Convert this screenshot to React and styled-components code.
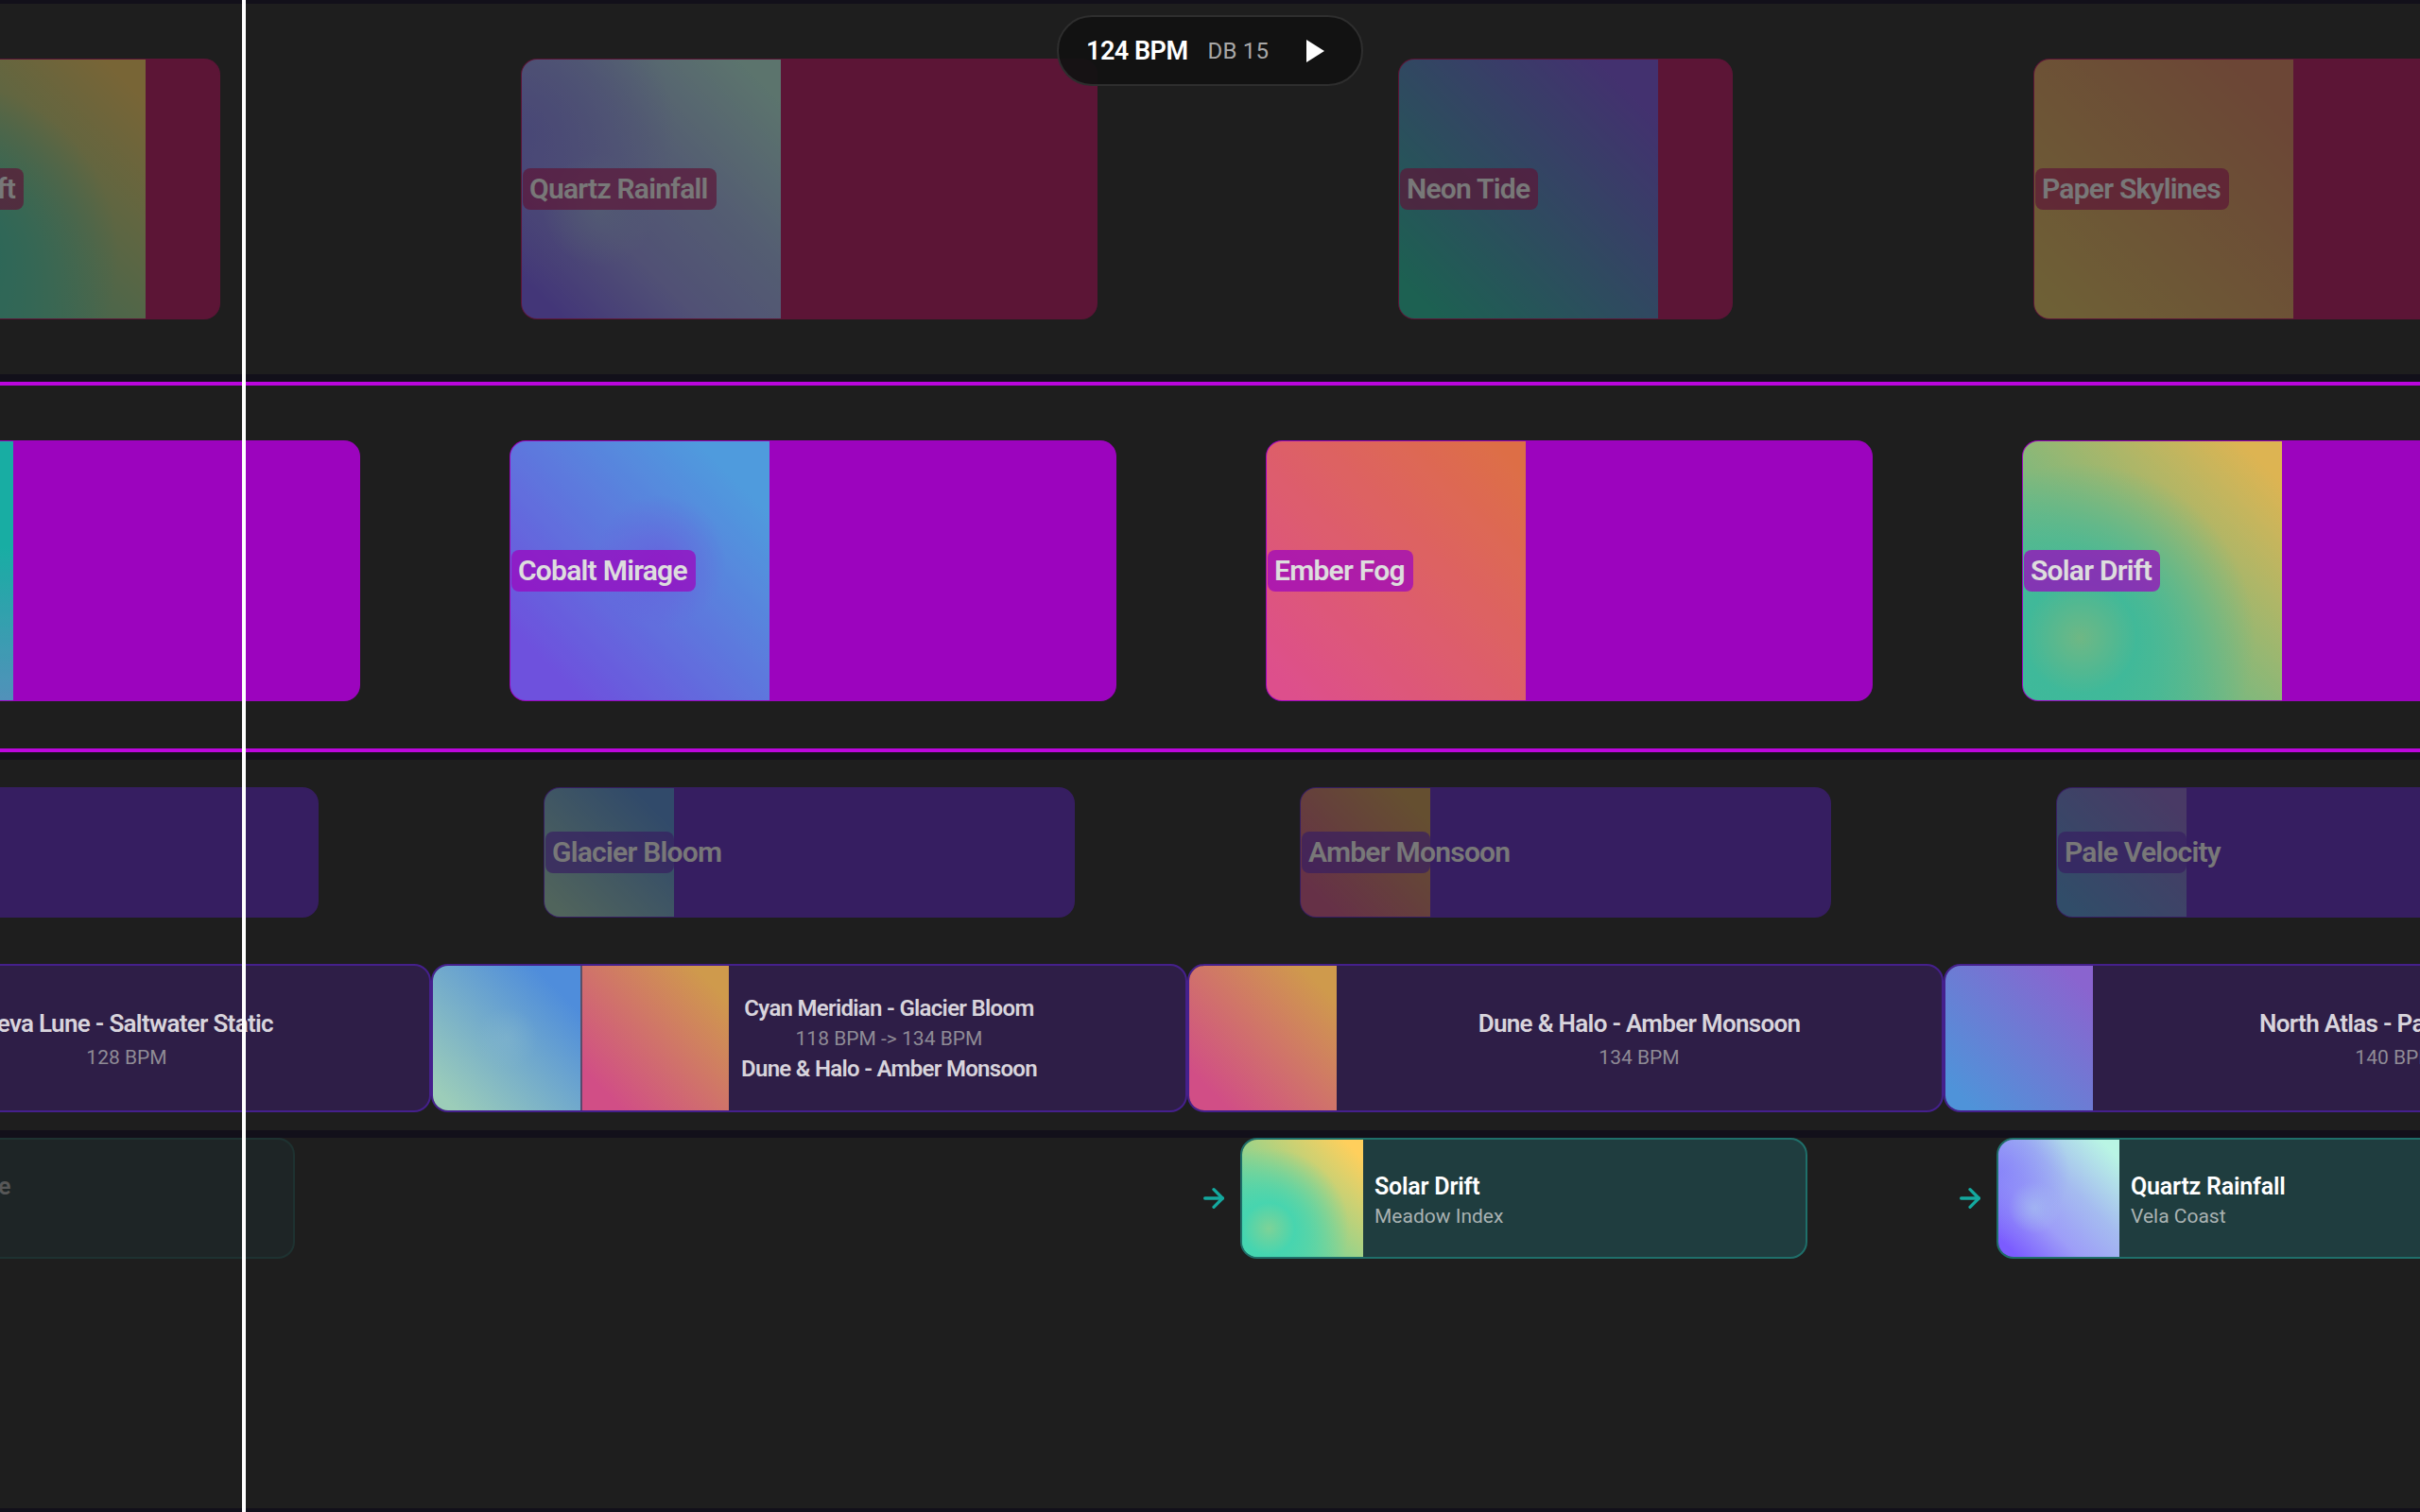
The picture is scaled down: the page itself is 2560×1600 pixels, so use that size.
import React from "react";
import styled, { createGlobalStyle } from "styled-components";
import { ArrowRight } from "lucide-react";

const GlobalStyle = createGlobalStyle`
  html, body {
    margin: 0;
    background: #1e1e1e;
  }
  * {
    box-sizing: border-box;
  }
`;

const gradients = {
  solar: "radial-gradient(circle at 22% 76%, rgba(128,210,150,0.9) 0, rgba(69,213,176,0.95) 20%, rgba(69,213,176,0.7) 32%, rgba(69,213,176,0) 62%), linear-gradient(45deg, #43d6b1 8%, #ffcf5c 92%)",
  quartz: "radial-gradient(circle at 30% 58%, rgba(165,190,240,0.7), rgba(165,190,240,0) 24%), radial-gradient(circle at 0% 28%, rgba(130,125,250,0.75), rgba(130,125,250,0) 48%), linear-gradient(45deg, #7b5cff 8%, #9d9df8 34%, #a5bcf0 60%, #b9f5e4 92%)",
  neon: "linear-gradient(45deg, #1cc5a0 8%, #7a4fe8 88%)",
  paper: "linear-gradient(45deg, #e6c35c 6%, #e0825c 88%)",
  cobalt: "radial-gradient(circle at 58% 46%, rgba(125,91,255,0.55), rgba(125,91,255,0) 32%), linear-gradient(45deg, #7c5bff 14%, #58b1ff 86%)",
  ember: "linear-gradient(45deg, #ff58a0 6%, #ff7d4e 94%)",
  teal: "linear-gradient(0deg, #5ba6d6, #17c7bb 60%)",
  glacier: "radial-gradient(circle at 50% 50%, rgba(135,185,205,0.4), rgba(135,185,205,0) 30%), linear-gradient(45deg, #9ccdb9 8%, #4f8ddb 84%)",
  amber: "linear-gradient(45deg, #d14e86 14%, #cf9a4c 88%)",
  pale: "linear-gradient(45deg, #4f93d9 10%, #8a64cf 90%)",
};

const Stage = styled.div`
  position: relative;
  width: 2560px;
  height: 1600px;
  overflow: hidden;
  background: #1e1e1e;
  font-family: Roboto, sans-serif;
`;

const Strip = styled.div`
  height: ${(p) => p.$h}px;
  background: #12101a;
`;

const Rule = styled.div`
  height: 4px;
  background: #bb06dd;
`;

const Section = styled.section`
  height: ${(p) => p.$h}px;
`;

const Lane = styled.div`
  display: flex;
  gap: ${(p) => p.$gap}px;
  margin-left: ${(p) => p.$offset}px;
  padding-top: ${(p) => p.$top}px;
  width: max-content;
`;

const Clip = styled.div`
  flex: none;
  display: flex;
  width: ${(p) => p.$w}px;
  height: ${(p) => p.$h}px;
  border-radius: 16px;
  background: ${(p) => p.$fill};
  box-shadow: 0 0 0 1px ${(p) => p.$fill};
  opacity: ${(p) => p.$dim};
`;

const ClipArt = styled.div`
  flex: none;
  display: flex;
  align-items: center;
  width: ${(p) => p.$w}px;
  border-radius: 16px 0 0 16px;
`;

const ClipLabel = styled.span`
  min-width: 0;
  max-width: calc(100% - 1px);
  height: 44px;
  margin-left: 1px;
  padding: 0 9px 0 7px;
  border-radius: 8px;
  background: ${(p) => p.$tint};
  color: #fff;
  font-size: 30px;
  font-weight: 600;
  letter-spacing: -0.75px;
  line-height: 44px;
  white-space: nowrap;
`;

const Mix = styled.div`
  flex: none;
  display: flex;
  width: 800px;
  height: 157px;
  border: 2px solid #45208c;
  border-radius: 18px;
  background: #2e1e47;
  overflow: hidden;
`;

const MixArt = styled.div`
  flex: none;
  width: 156px;
  & + & {
    width: 157px;
    border-left: 2px solid rgba(60, 60, 110, 0.8);
  }
`;

const MixText = styled.div`
  flex: ${(p) => (p.$wide ? "1" : "none")};
  display: flex;
  flex-direction: column;
  align-items: center;
  justify-content: center;
  gap: ${(p) => (p.$wide ? 10 : 6)}px;
  padding: ${(p) => (p.$wide ? "4px 0 0" : "0 13px")};
  white-space: nowrap;
`;

const MixTitle = styled.div`
  color: #d8d4dc;
  font-size: ${(p) => (p.$large ? 26 : 24)}px;
  font-weight: 600;
  letter-spacing: -0.7px;
  line-height: 26px;
`;

const MixBpm = styled.div`
  color: #8f8b96;
  font-size: 21px;
  line-height: 26px;
`;

const QueueSlot = styled.div`
  flex: none;
  display: flex;
  align-items: center;
  justify-content: flex-end;
  gap: 12px;
  width: 800px;
  height: 128px;
  color: #14a89e;
  opacity: ${(p) => p.$dim};
`;

const QueueCard = styled.div`
  flex: none;
  display: flex;
  width: 600px;
  height: 128px;
  border: 2px solid #1f6f6a;
  border-radius: 18px;
  background: #1f3d3f;
  overflow: hidden;
`;

const QueueArt = styled.div`
  flex: none;
  width: 128px;
`;

const QueueText = styled.div`
  display: flex;
  flex-direction: column;
  justify-content: center;
  gap: 1px;
  padding: 4px 12px 0;
`;

const QueueTitle = styled.div`
  color: #fff;
  font-size: 25px;
  font-weight: 600;
  letter-spacing: -0.2px;
  line-height: 32px;
  white-space: nowrap;
`;

const QueueSub = styled.div`
  color: #a9b2b2;
  font-size: 21px;
  line-height: 28px;
  white-space: nowrap;
`;

const Transport = styled.div`
  position: absolute;
  top: 16px;
  left: 1118px;
  display: flex;
  align-items: center;
  width: 324px;
  height: 75px;
  padding: 0 0 0 29px;
  border: 2px solid #2e2e2e;
  border-radius: 37px;
  background: rgba(18, 18, 18, 0.94);
`;

const Bpm = styled.span`
  color: #fff;
  font-size: 27px;
  font-weight: 600;
  letter-spacing: -0.5px;
`;

const Db = styled.span`
  margin-left: 21px;
  color: #a8a8a8;
  font-size: 24px;
  letter-spacing: 0.2px;
`;

const PlayButton = styled.button`
  display: flex;
  margin-left: 40px;
  padding: 0;
  border: 0;
  background: none;
`;

const Playhead = styled.div`
  position: absolute;
  top: 0;
  left: 256px;
  width: 4px;
  height: 100%;
  background: #fff;
`;

const topClips = [
  { name: "Solar Drift", art: "solar", w: 352 },
  { name: "Quartz Rainfall", art: "quartz", w: 608 },
  { name: "Neon Tide", art: "neon", w: 352 },
  { name: "Paper Skylines", art: "paper", w: 608 },
];

const midClips = [
  { name: "Tidal Echo", art: "teal" },
  { name: "Cobalt Mirage", art: "cobalt" },
  { name: "Ember Fog", art: "ember" },
  { name: "Solar Drift", art: "solar" },
];

const lowClips = [
  { name: "Saltwater Static", art: "neon" },
  { name: "Glacier Bloom", art: "glacier" },
  { name: "Amber Monsoon", art: "amber" },
  { name: "Pale Velocity", art: "pale" },
];

const mixes = [
  { arts: ["neon"], lines: ["Neva Lune - Saltwater Static"], bpm: "128 BPM" },
  {
    arts: ["glacier", "amber"],
    lines: ["Cyan Meridian - Glacier Bloom", "Dune & Halo - Amber Monsoon"],
    bpm: "118 BPM -> 134 BPM",
  },
  { arts: ["amber"], lines: ["Dune & Halo - Amber Monsoon"], bpm: "134 BPM" },
  { arts: ["pale"], lines: ["North Atlas - Pale Velocity"], bpm: "140 BPM" },
];

const queue = [
  { title: "Saltwater Line", sub: "Neva Lune", art: "neon", dim: 0.25 },
  null,
  { title: "Solar Drift", sub: "Meadow Index", art: "solar", dim: 1 },
  { title: "Quartz Rainfall", sub: "Vela Coast", art: "quartz", dim: 1 },
];

function ClipLane({ clips, artWidth, height, fill, tint, dim, ...lane }) {
  return (
    <Lane {...lane}>
      {clips.map((clip, i) => (
        <Clip key={i} $w={clip.w || lane.$w} $h={height} $fill={fill} $dim={dim}>
          <ClipArt $w={artWidth} style={{ background: gradients[clip.art] }}>
            <ClipLabel $tint={tint}>{clip.name}</ClipLabel>
          </ClipArt>
        </Clip>
      ))}
    </Lane>
  );
}

export default function App() {
  return (
    <Stage>
      <GlobalStyle />
      <Strip $h={4} />
      <Section $h={392}>
        <ClipLane
          clips={topClips}
          artWidth={274}
          height={274}
          fill="#b9085c"
          tint="rgba(185, 8, 92, 0.7)"
          dim={0.4}
          $offset={-120}
          $gap={320}
          $top={59}
        />
      </Section>
      <Strip $h={8} />
      <Rule />
      <Section $h={384}>
        <ClipLane
          clips={midClips}
          artWidth={274}
          height={274}
          fill="#b300db"
          tint="rgba(179, 0, 219, 0.72)"
          dim={0.85}
          $w={640}
          $offset={-260}
          $gap={160}
          $top={59}
        />
      </Section>
      <Rule />
      <Strip $h={8} />
      <Section $h={392}>
        <ClipLane
          clips={lowClips}
          artWidth={137}
          height={136}
          fill="#5c1ec5"
          tint="rgba(92, 30, 197, 0.7)"
          dim={0.4}
          $w={560}
          $offset={-224}
          $gap={240}
          $top={30}
        />
        <Lane $offset={-344} $gap={0} $top={50}>
          {mixes.map((mix, i) => (
            <Mix key={i}>
              {mix.arts.map((art) => (
                <MixArt key={art} style={{ background: gradients[art] }} />
              ))}
              <MixText $wide={mix.arts.length === 1}>
                <MixTitle $large={mix.arts.length === 1}>{mix.lines[0]}</MixTitle>
                <MixBpm>{mix.bpm}</MixBpm>
                {mix.lines[1] && <MixTitle>{mix.lines[1]}</MixTitle>}
              </MixText>
            </Mix>
          ))}
        </Lane>
      </Section>
      <Strip $h={8} />
      <Section $h={392}>
        <Lane $offset={-488} $gap={0} $top={0}>
          {queue.map((item, i) => (
            <QueueSlot key={i} $dim={item ? item.dim : 1}>
              {item && (
                <>
                  <ArrowRight size={32} strokeWidth={2.5} />
                  <QueueCard>
                    <QueueArt style={{ background: gradients[item.art] }} />
                    <QueueText>
                      <QueueTitle>{item.title}</QueueTitle>
                      <QueueSub>{item.sub}</QueueSub>
                    </QueueText>
                  </QueueCard>
                </>
              )}
            </QueueSlot>
          ))}
        </Lane>
      </Section>
      <Strip $h={4} />
      <Transport>
        <Bpm>124 BPM</Bpm>
        <Db>DB 15</Db>
        <PlayButton>
          <svg width="20" height="24" viewBox="0 0 20 24">
            <polygon points="0,0 19,12 0,24" fill="#fff" />
          </svg>
        </PlayButton>
      </Transport>
      <Playhead />
    </Stage>
  );
}
